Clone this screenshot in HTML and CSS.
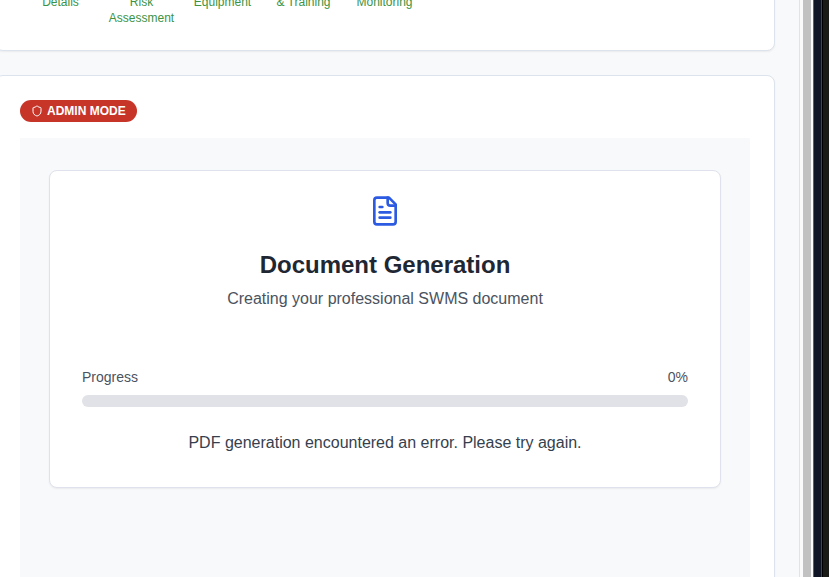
FILE: index.html
```
<!DOCTYPE html>
<html lang="en">
<head>
<meta charset="utf-8">
<title>Document Generation</title>
<link rel="stylesheet" href="styles.css">
</head>
<body>
<div class="window">
  <main class="page">
    <section class="card steps-card">
      <div class="steps">
        <span class="step">Details</span>
        <span class="step">Risk<br>Assessment</span>
        <span class="step">Equipment</span>
        <span class="step">&amp; Training</span>
        <span class="step">Monitoring</span>
      </div>
    </section>
    <section class="card main-card">
      <div class="badge">
        <svg class="badge-icon" viewBox="0 0 24 24" fill="none" stroke="currentColor" stroke-width="2" stroke-linecap="round" stroke-linejoin="round"><path d="M20 13c0 5-3.5 7.5-7.66 8.95a1 1 0 0 1-.67-.01C7.5 20.5 4 18 4 13V6a1 1 0 0 1 1-1c2 0 4.5-1.2 6.24-2.72a1.17 1.17 0 0 1 1.52 0C14.51 3.81 17 5 19 5a1 1 0 0 1 1 1z"/></svg>
        <span class="badge-label">ADMIN MODE</span>
      </div>
      <div class="panel">
        <div class="document">
          <svg class="document-icon" viewBox="0 0 24 24" fill="none" stroke="currentColor" stroke-width="2" stroke-linecap="round" stroke-linejoin="round"><path d="M15 2H6a2 2 0 0 0-2 2v16a2 2 0 0 0 2 2h12a2 2 0 0 0 2-2V7Z"/><path d="M14 2v4a2 2 0 0 0 2 2h4"/><path d="M10 9H8"/><path d="M16 13H8"/><path d="M16 17H8"/></svg>
          <h1 class="title">Document Generation</h1>
          <p class="subtitle">Creating your professional SWMS document</p>
          <div class="progress-head"><span>Progress</span><span>0%</span></div>
          <div class="progress-bar"></div>
          <p class="message">PDF generation encountered an error. Please try again.</p>
        </div>
      </div>
    </section>
  </main>
  <div class="scroll-track"><div class="scroll-thumb"></div></div>
  <div class="window-edge"></div>
  <div class="desktop"></div>
</div>
</body>
</html>
```
FILE: styles.css
```
* { box-sizing: border-box; }
body {
  margin: 0;
  overflow: hidden;
  font-family: "Liberation Sans", Arial, sans-serif;
}
h1, p { margin: 0; }
svg { display: block; }
.window {
  display: flex;
  height: 577px;
  overflow: hidden;
}
.page {
  width: 799px;
  flex: none;
  display: flex;
  flex-direction: column;
  gap: 24px;
  background: #f8f9fb;
}
.card {
  flex: none;
  width: 780px;
  margin-left: -5px;
  padding: 24px;
  background: #fff;
  border: 1px solid #dde3ec;
  border-radius: 8px;
  box-shadow: 0 1px 2px rgba(0, 0, 0, .06);
}
.steps-card {
  margin-top: -31px;
  height: 82px;
}
.main-card { height: 600px; }
.steps { display: flex; }
.step {
  width: 81px;
  text-align: center;
  font-size: 12px;
  line-height: 16px;
  color: #3c9344;
}
.badge {
  display: flex;
  align-items: center;
  gap: 4px;
  width: 117px;
  height: 22px;
  padding: 0 11px;
  border-radius: 11px;
  background: #c73529;
  color: #fff;
  font-size: 12px;
  font-weight: 700;
  line-height: 16px;
  white-space: nowrap;
}
.badge-icon { width: 12px; height: 12px; flex: none; }
.panel {
  height: 500px;
  margin-top: 16px;
  padding: 32px 29px;
  background: #f8f9fb;
}
.document {
  display: flex;
  flex-direction: column;
  height: 318px;
  padding: 24px 32px 32px;
  background: #fff;
  border: 1px solid #dfe2ec;
  border-radius: 8px;
  box-shadow: 0 1px 2px rgba(0, 0, 0, .06);
  text-align: center;
}
.document-icon {
  width: 32px;
  height: 32px;
  align-self: center;
  color: #2c5be2;
}
.title {
  margin-top: 22px;
  font-size: 24px;
  line-height: 32px;
  color: #1f2733;
}
.subtitle {
  margin-top: 6px;
  font-size: 16px;
  line-height: 24px;
  color: #4b5360;
}
.progress-head {
  display: flex;
  justify-content: space-between;
  margin-top: 56px;
  font-size: 14px;
  line-height: 20px;
  color: #4b5360;
}
.progress-bar {
  height: 12px;
  margin-top: 8px;
  border-radius: 6px;
  background: #e1e2e7;
}
.message {
  margin-top: 24px;
  font-size: 16px;
  line-height: 24px;
  color: #363f4e;
}
.scroll-track {
  width: 14px;
  flex: none;
  padding: 0 2px 0 3px;
  background: #fafafa;
  border-left: 1px solid #e3e3e4;
}
.scroll-thumb { height: 100%; background: #c1c1c1; }
.window-edge {
  width: 9px;
  flex: none;
  background: #101525;
  border-left: 1px solid #594fc4;
  border-right: 1px solid #43464b;
}
.desktop {
  flex: 1;
  background: #1a1b17;
  border-left: 1px solid #000;
}
```
